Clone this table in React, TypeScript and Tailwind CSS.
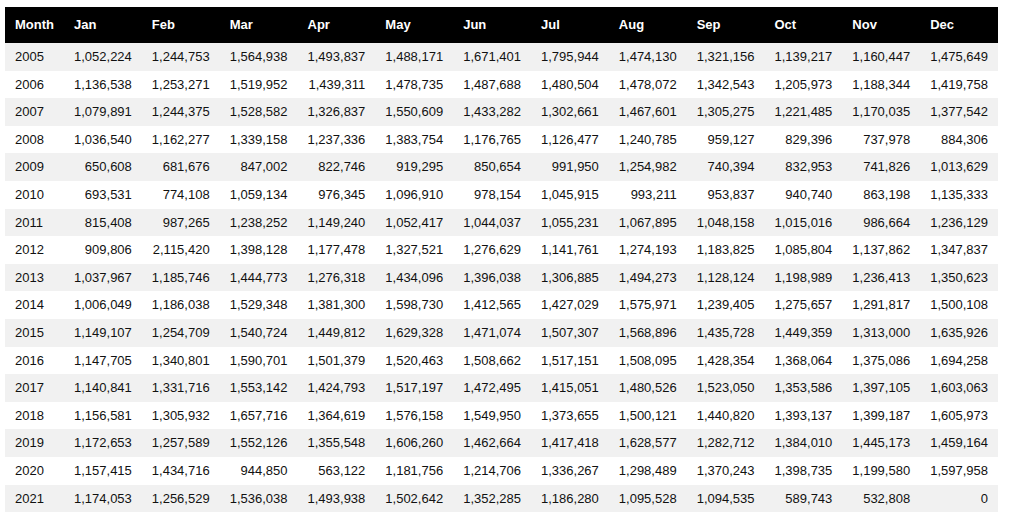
import React from "react";

const months = ["Jan","Feb","Mar","Apr","May","Jun","Jul","Aug","Sep","Oct","Nov","Dec"];

const data: [string, string[]][] = [
  ["2005", "1,052,224 1,244,753 1,564,938 1,493,837 1,488,171 1,671,401 1,795,944 1,474,130 1,321,156 1,139,217 1,160,447 1,475,649".split(" ")],
  ["2006", "1,136,538 1,253,271 1,519,952 1,439,311 1,478,735 1,487,688 1,480,504 1,478,072 1,342,543 1,205,973 1,188,344 1,419,758".split(" ")],
  ["2007", "1,079,891 1,244,375 1,528,582 1,326,837 1,550,609 1,433,282 1,302,661 1,467,601 1,305,275 1,221,485 1,170,035 1,377,542".split(" ")],
  ["2008", "1,036,540 1,162,277 1,339,158 1,237,336 1,383,754 1,176,765 1,126,477 1,240,785 959,127 829,396 737,978 884,306".split(" ")],
  ["2009", "650,608 681,676 847,002 822,746 919,295 850,654 991,950 1,254,982 740,394 832,953 741,826 1,013,629".split(" ")],
  ["2010", "693,531 774,108 1,059,134 976,345 1,096,910 978,154 1,045,915 993,211 953,837 940,740 863,198 1,135,333".split(" ")],
  ["2011", "815,408 987,265 1,238,252 1,149,240 1,052,417 1,044,037 1,055,231 1,067,895 1,048,158 1,015,016 986,664 1,236,129".split(" ")],
  ["2012", "909,806 2,115,420 1,398,128 1,177,478 1,327,521 1,276,629 1,141,761 1,274,193 1,183,825 1,085,804 1,137,862 1,347,837".split(" ")],
  ["2013", "1,037,967 1,185,746 1,444,773 1,276,318 1,434,096 1,396,038 1,306,885 1,494,273 1,128,124 1,198,989 1,236,413 1,350,623".split(" ")],
  ["2014", "1,006,049 1,186,038 1,529,348 1,381,300 1,598,730 1,412,565 1,427,029 1,575,971 1,239,405 1,275,657 1,291,817 1,500,108".split(" ")],
  ["2015", "1,149,107 1,254,709 1,540,724 1,449,812 1,629,328 1,471,074 1,507,307 1,568,896 1,435,728 1,449,359 1,313,000 1,635,926".split(" ")],
  ["2016", "1,147,705 1,340,801 1,590,701 1,501,379 1,520,463 1,508,662 1,517,151 1,508,095 1,428,354 1,368,064 1,375,086 1,694,258".split(" ")],
  ["2017", "1,140,841 1,331,716 1,553,142 1,424,793 1,517,197 1,472,495 1,415,051 1,480,526 1,523,050 1,353,586 1,397,105 1,603,063".split(" ")],
  ["2018", "1,156,581 1,305,932 1,657,716 1,364,619 1,576,158 1,549,950 1,373,655 1,500,121 1,440,820 1,393,137 1,399,187 1,605,973".split(" ")],
  ["2019", "1,172,653 1,257,589 1,552,126 1,355,548 1,606,260 1,462,664 1,417,418 1,628,577 1,282,712 1,384,010 1,445,173 1,459,164".split(" ")],
  ["2020", "1,157,415 1,434,716 944,850 563,122 1,181,756 1,214,706 1,336,267 1,298,489 1,370,243 1,398,735 1,199,580 1,597,958".split(" ")],
  ["2021", "1,174,053 1,256,529 1,536,038 1,493,938 1,502,642 1,352,285 1,186,280 1,095,528 1,094,535 589,743 532,808 0".split(" ")],
];

export default function App() {
  return (
    <div className="w-[1013px] h-[516px] bg-white pt-[7px] pl-[5px] font-['Liberation_Sans',Arial,sans-serif] text-[13px] text-[#111]">
      <div className="w-[993px]">
        <div className="grid grid-cols-[59px_repeat(12,1fr)] h-[36px] bg-black text-white font-bold items-center">
          <div className="pl-[10px]">Month</div>
          {months.map((m) => (
            <div key={m} className="pl-[10px]">{m}</div>
          ))}
        </div>
        {data.map(([year, vals], i) => (
          <div
            key={year}
            className={`grid grid-cols-[59px_repeat(12,1fr)] h-[27.6px] items-center ${i % 2 === 0 ? "bg-[#f1f1f1]" : "bg-white"}`}
          >
            <div className="pl-[10px]">{year}</div>
            {vals.map((v, j) => (
              <div key={j} className="text-right pr-[10px]">{v}</div>
            ))}
          </div>
        ))}
      </div>
    </div>
  );
}
